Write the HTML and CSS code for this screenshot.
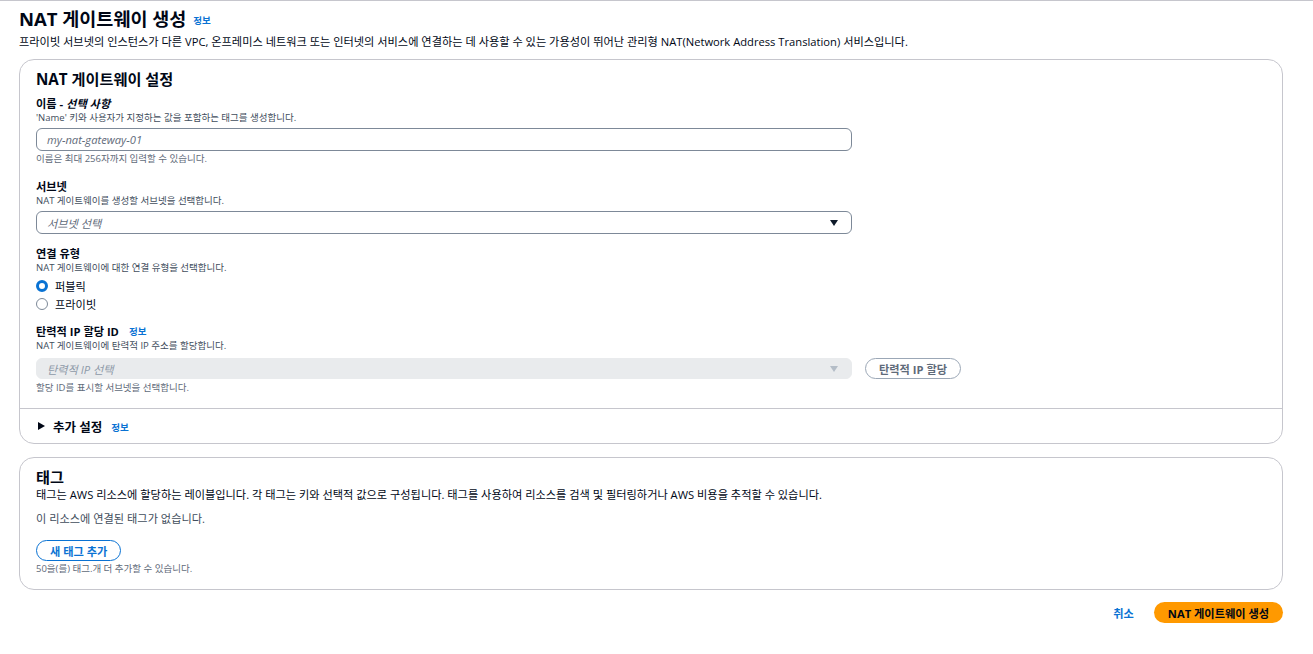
FILE: index.html
```html
<!DOCTYPE html>
<html lang="ko">
<head>
<meta charset="utf-8">
<title>NAT 게이트웨이 생성</title>
<link rel="stylesheet" href="styles.css">
</head>
<body>
<div class="page">
  <header class="page-head">
    <h1 class="page-title">NAT 게이트웨이 생성 <a class="info info-title" href="#">정보</a></h1>
    <p class="page-desc">프라이빗 서브넷의 인스턴스가 다른 VPC, 온프레미스 네트워크 또는 인터넷의 서비스에 연결하는 데 사용할 수 있는 가용성이 뛰어난 관리형 NAT(Network Address Translation) 서비스입니다.</p>
  </header>

  <section class="container">
    <div class="container-body">
      <h2 class="container-title">NAT 게이트웨이 설정</h2>

      <div class="field field-name">
        <div class="label">이름 - <i>선택 사항</i></div>
        <div class="desc">'Name' 키와 사용자가 지정하는 값을 포함하는 태그를 생성합니다.</div>
        <div class="input"><span class="placeholder">my-nat-gateway-01</span></div>
        <div class="hint">이름은 최대 256자까지 입력할 수 있습니다.</div>
      </div>

      <div class="field field-subnet">
        <div class="label">서브넷</div>
        <div class="desc">NAT 게이트웨이를 생성할 서브넷을 선택합니다.</div>
        <div class="input select"><span class="placeholder">서브넷 선택</span><span class="caret"></span></div>
      </div>

      <div class="field field-conn">
        <div class="label">연결 유형</div>
        <div class="desc">NAT 게이트웨이에 대한 연결 유형을 선택합니다.</div>
        <div class="radios">
          <div class="radio-row"><span class="radio checked"></span><span class="radio-label">퍼블릭</span></div>
          <div class="radio-row"><span class="radio"></span><span class="radio-label">프라이빗</span></div>
        </div>
      </div>

      <div class="field field-eip">
        <div class="label">탄력적 IP 할당 ID <a class="info info-label" href="#">정보</a></div>
        <div class="desc">NAT 게이트웨이에 탄력적 IP 주소를 할당합니다.</div>
        <div class="eip-row">
          <div class="input select disabled"><span class="placeholder">탄력적 IP 선택</span><span class="caret"></span></div>
          <button class="btn btn-disabled" type="button">탄력적 IP 할당</button>
        </div>
        <div class="hint hint-eip">할당 ID를 표시할 서브넷을 선택합니다.</div>
      </div>
    </div>
    <div class="expander">
      <span class="tri"></span><span class="expander-title">추가 설정</span><a class="info info-exp" href="#">정보</a>
    </div>
  </section>

  <section class="container container-tags">
    <div class="container-body tags-body">
      <h2 class="container-title">태그</h2>
      <p class="tags-desc">태그는 AWS 리소스에 할당하는 레이블입니다. 각 태그는 키와 선택적 값으로 구성됩니다. 태그를 사용하여 리소스를 검색 및 필터링하거나 AWS 비용을 추적할 수 있습니다.</p>
      <p class="tags-empty">이 리소스에 연결된 태그가 없습니다.</p>
      <button class="btn btn-normal" type="button">새 태그 추가</button>
      <div class="hint">50을(를) 태그.개 더 추가할 수 있습니다.</div>
    </div>
  </section>

  <div class="actions">
    <a class="cancel" href="#">취소</a>
    <button class="btn btn-primary" type="button">NAT 게이트웨이 생성</button>
  </div>
</div>
</body>
</html>
```

FILE: styles.css
```css
* { box-sizing: border-box; }
html, body { margin: 0; padding: 0; background: #ffffff; }
body {
  font-family: "Open Sans", "Noto Sans CJK KR", sans-serif;
  color: #000716;
  border-top: 1px solid #c6c6cd;
}
a { text-decoration: none; }
.page { padding: 6px 30px 0 19px; }

.page-title {
  margin: 0;
  font-size: 18.5px;
  line-height: 24px;
  font-weight: 700;
  display: flex;
  align-items: center;
  gap: 7px;
}
.info { color: #0972d3; font-weight: 700; }
.info-title { font-size: 9.5px; line-height: 12px; margin-top: 4px; }
.info-label { font-size: 9.5px; margin-left: 10px; }
.info-exp { font-size: 9.5px; margin-left: 9px; margin-top: 1px; }
.page-desc {
  margin: 3px 0 0;
  font-size: 11.2px;
  line-height: 16px;
}

.container {
  margin-top: 9px;
  border: 1px solid #c6c6cd;
  border-radius: 15px;
}
.container-body { padding: 9px 16px 13px 16px; }
.container-title {
  margin: 0;
  font-size: 15.2px;
  line-height: 20px;
  font-weight: 700;
}
.field-name { margin-top: 8px; }
.field-subnet { margin-top: 14px; }
.field-conn { margin-top: 13px; }
.field-eip { margin-top: 12px; }
.label {
  font-size: 11.2px;
  line-height: 14px;
  font-weight: 700;
  display: flex;
  align-items: center;
}
.label i { margin-left: 3px; }
.desc {
  font-size: 9.5px;
  line-height: 14px;
  color: #414d5c;
}
.input {
  margin-top: 3px;
  width: 816px;
  height: 23px;
  border: 1px solid #7d8998;
  border-radius: 6px;
  display: flex;
  align-items: center;
  padding: 0 10px;
}
.placeholder {
  font-style: italic;
  font-size: 11.2px;
  color: #5f6b7a;
}
.select { justify-content: space-between; padding-right: 13px; }
.caret {
  width: 0; height: 0;
  border-left: 4.5px solid transparent;
  border-right: 4.5px solid transparent;
  border-top: 6px solid #0f1b2a;
}
.select.disabled {
  background: #e9ebed;
  border-color: #e9ebed;
  height: 21px;
}
.select.disabled .placeholder { color: #8d99a8; }
.select.disabled .caret { border-top-color: #b4bdc7; }
.hint {
  margin-top: 1px;
  font-size: 9.5px;
  line-height: 14px;
  color: #5f6b7a;
}
.hint-eip { margin-top: 2px; }
.radios { margin-top: 2px; }
.radio-row {
  display: flex;
  align-items: center;
  height: 18px;
}
.radio {
  width: 12px; height: 12px;
  border-radius: 50%;
  border: 1.5px solid #7d8998;
  margin-right: 7px;
}
.radio.checked { border: 3.5px solid #0972d3; }
.radio-label { font-size: 11.2px; }

.eip-row {
  display: flex;
  align-items: center;
  gap: 13px;
  margin-top: 5px;
}
.eip-row .input { margin-top: 0; }

.btn {
  font-family: inherit;
  font-weight: 700;
  font-size: 11.2px;
  border-radius: 12px;
  padding: 0 13px;
  height: 21px;
  background: #ffffff;
  display: inline-flex;
  align-items: center;
}
.btn-disabled {
  border: 1px solid #9ba7b6;
  color: #5f6b7a;
}
.btn-normal {
  margin-top: 14px;
  border: 1.5px solid #0972d3;
  color: #0972d3;
  padding: 0 13px;
}
.btn-primary {
  border: none;
  background: #ff9900;
  color: #000716;
  padding: 0 14px;
}

.expander {
  border-top: 1px solid #c6c6cd;
  display: flex;
  align-items: center;
  height: 35px;
  padding: 0 18px;
}
.tri {
  width: 0; height: 0;
  border-top: 4px solid transparent;
  border-bottom: 4px solid transparent;
  border-left: 7px solid #000716;
  margin-right: 8px;
}
.expander-title { font-size: 12.5px; font-weight: 700; }

.container-tags { margin-top: 13px; }
.tags-body { padding-bottom: 13px; }
.tags-desc {
  margin: 1px 0 0;
  font-size: 11.2px;
  line-height: 14px;
}
.tags-empty {
  margin: 10px 0 0;
  font-size: 11.2px;
  line-height: 14px;
  color: #414d5c;
}

.actions {
  display: flex;
  justify-content: flex-end;
  align-items: center;
  gap: 20px;
  margin-top: 12px;
}
.cancel { color: #0972d3; font-weight: 700; font-size: 11.2px; }
```
